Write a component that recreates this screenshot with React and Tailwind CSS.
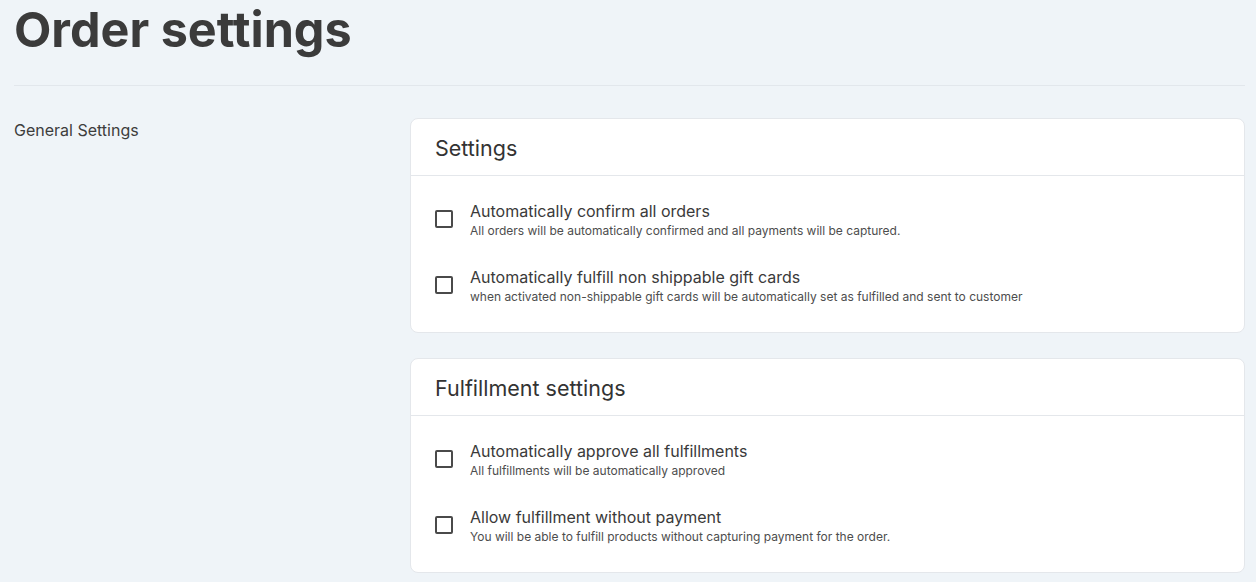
const sections = [
  {
    title: "Settings",
    items: [
      {
        label: "Automatically confirm all orders",
        hint: "All orders will be automatically confirmed and all payments will be captured.",
      },
      {
        label: "Automatically fulfill non shippable gift cards",
        hint: "when activated non-shippable gift cards will be automatically set as fulfilled and sent to customer",
      },
    ],
  },
  {
    title: "Fulfillment settings",
    items: [
      {
        label: "Automatically approve all fulfillments",
        hint: "All fulfillments will be automatically approved",
      },
      {
        label: "Allow fulfillment without payment",
        hint: "You will be able to fulfill products without capturing payment for the order.",
      },
    ],
  },
];

const Checkbox = () => (
  <span className="w-[18px] h-[18px] shrink-0 rounded-[2px] border-2 border-[#4a4a4a] bg-white" />
);

const SettingsCard = ({ title, items }) => (
  <div className="bg-white border border-[#e4e7eb] rounded-lg">
    <div className="px-6 pt-4 pb-[14px] border-b border-[#e4e7eb]">
      <h2 className="text-[21.5px] leading-[26px] text-[#333]">{title}</h2>
    </div>
    <div className="flex flex-col gap-[26px] px-6 pt-[23px] pb-[27px]">
      {items.map((item) => (
        <label key={item.label} className="flex items-center gap-[17px]">
          <Checkbox />
          <div>
            <p className="text-base leading-6 text-[#3a3a3a]">{item.label}</p>
            <p className="text-xs leading-4 text-[#4d4d4d]">{item.hint}</p>
          </div>
        </label>
      ))}
    </div>
  </div>
);

export default function App() {
  return (
    <div
      className="min-h-screen bg-[#eff4f8] pl-[14px] pr-[11px]"
      style={{ fontFamily: "Inter, 'Noto Sans', sans-serif" }}
    >
      <h1 className="pt-[4px] text-[48.5px] leading-[52px] font-bold text-[#3b3b3b]">
        Order settings
      </h1>
      <hr className="mt-[29px] border-t border-[#e2e7ec]" />

      <div className="flex pt-[32px]">
        <div className="w-[396px] shrink-0">
          <p className="text-base leading-6 text-[#3d3d3d]">General Settings</p>
        </div>
        <div className="flex flex-1 flex-col gap-[25px]">
          {sections.map((s) => (
            <SettingsCard key={s.title} title={s.title} items={s.items} />
          ))}
        </div>
      </div>
    </div>
  );
}
